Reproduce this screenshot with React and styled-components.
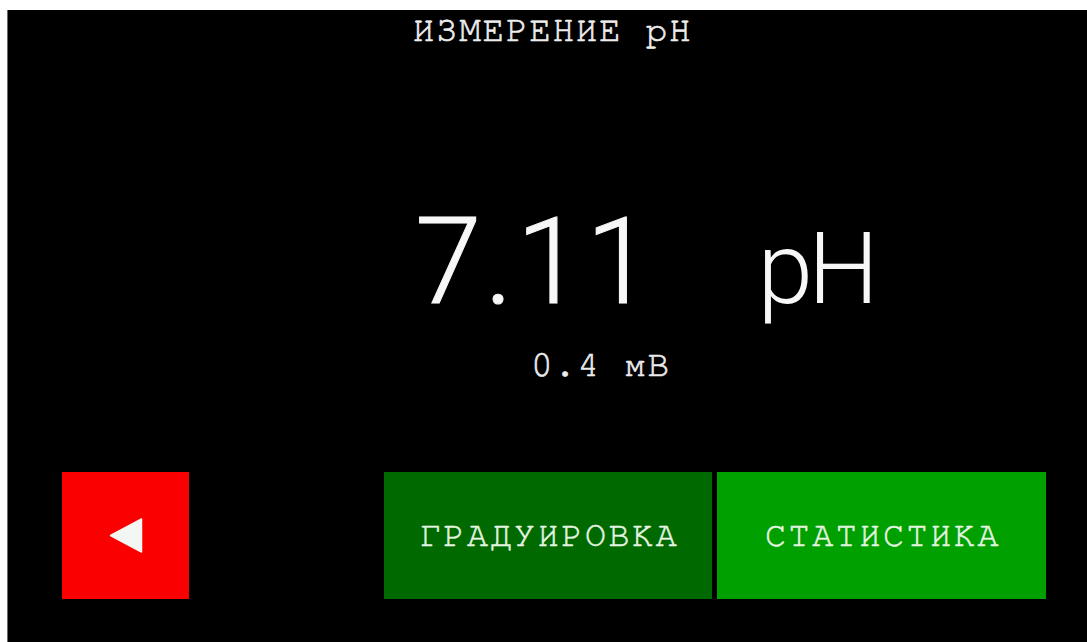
import React from "react";
import styled, { createGlobalStyle } from "styled-components";

const GlobalStyle = createGlobalStyle`
  html, body {
    margin: 0;
    padding: 0;
    background: #ffffff;
  }
  body {
    width: 1087px;
    height: 642px;
    overflow: hidden;
  }
`;

const typewriter = `"Nimbus Mono PS", "Nimbus Mono L", FreeMono, Courier, "Liberation Serif", serif`;

const Frame = styled.div`
  padding: 10px 0 0 7px;
  width: 1087px;
  height: 642px;
  box-sizing: border-box;
`;

const Screen = styled.main`
  height: 632px;
  background: #000;
  border-left: 1px solid #6a6a6a;
  display: flex;
  flex-direction: column;
  color: #f2f2f2;
  font-family: ${typewriter};
`;

const Title = styled.h1`
  margin: 0;
  padding: 2px 0 0 10px;
  font-size: 36px;
  line-height: 36px;
  font-weight: 400;
  letter-spacing: 1.7px;
  text-align: center;
  color: #ededed;
  -webkit-text-stroke: 0.6px #ededed;
`;

const Readout = styled.section`
  margin: 154px 0 0 407px;
  display: flex;
  flex-direction: column;
  align-items: flex-start;
`;

const ValueRow = styled.div`
  display: flex;
  align-items: baseline;
  gap: 102px;
  font-family: Roboto, "DejaVu Sans", sans-serif;
  font-weight: 300;
  color: #f7f7f7;
`;

const Value = styled.span`
  font-size: 120px;
  line-height: 120px;
  letter-spacing: 3px;
  -webkit-text-stroke: 1px #f7f7f7;
`;

const Unit = styled.span`
  font-size: 100px;
  line-height: 100px;
  letter-spacing: -5px;
`;

const Millivolts = styled.div`
  margin: 25px 0 0 116px;
  font-size: 36px;
  line-height: 36px;
  letter-spacing: 1.7px;
  color: #ececec;
  -webkit-text-stroke: 0.6px #ececec;
`;

const ButtonBar = styled.nav`
  margin-top: auto;
  margin-bottom: 43px;
  padding-left: 54px;
  display: flex;
  align-items: stretch;
  height: 127px;
`;

const BackButton = styled.button`
  width: 127px;
  height: 127px;
  margin-right: 195px;
  border: none;
  padding: 0;
  background: #fa0000;
  display: flex;
  align-items: center;
  justify-content: center;
  cursor: pointer;
`;

const ActionButton = styled.button`
  width: ${(p) => p.$width}px;
  height: 127px;
  margin-right: ${(p) => (p.$spaced ? 5 : 0)}px;
  border: none;
  padding: 0 0 0 3px;
  background: ${(p) => p.$bg};
  color: #e6f5e2;
  font-family: ${typewriter};
  font-size: 35px;
  letter-spacing: 2.6px;
  -webkit-text-stroke: 0.5px #e6f5e2;
  display: flex;
  align-items: center;
  justify-content: center;
  cursor: pointer;
`;

const BackArrow = () => (
  <svg width="34" height="35" viewBox="0 0 34 35" aria-hidden="true">
    <path d="M1.5 17.5 L32.5 1 L32.5 34 Z" fill="#f4f6f4" stroke="#f4f6f4" strokeWidth="1.5" strokeLinejoin="round" />
  </svg>
);

export default function App() {
  return (
    <Frame>
      <GlobalStyle />
      <Screen>
        <Title>ИЗМЕРЕНИЕ pH</Title>
        <Readout>
          <ValueRow>
            <Value>7.11</Value>
            <Unit>pH</Unit>
          </ValueRow>
          <Millivolts>0.4 мВ</Millivolts>
        </Readout>
        <ButtonBar>
          <BackButton aria-label="Назад">
            <BackArrow />
          </BackButton>
          <ActionButton $width={328} $bg="#006a00" $spaced>
            ГРАДУИРОВКА
          </ActionButton>
          <ActionButton $width={329} $bg="#00a000">
            СТАТИСТИКА
          </ActionButton>
        </ButtonBar>
      </Screen>
    </Frame>
  );
}
